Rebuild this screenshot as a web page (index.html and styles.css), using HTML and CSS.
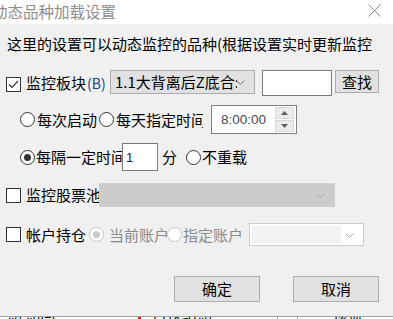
FILE: index.html
```html
<!DOCTYPE html>
<html lang="zh-CN">
<head>
<meta charset="utf-8">
<title>动态品种加载设置</title>
<link rel="stylesheet" href="styles.css">
</head>
<body>
<div class="window">
  <div class="titlebar">
    <span class="title">动态品种加载设置</span>
    <svg class="close" width="13" height="13" viewBox="0 0 13 13"><path d="M0.5 0.5L12.5 12.5M12.5 0.5L0.5 12.5" stroke="#8a8a8a" stroke-width="1" fill="none"/></svg>
  </div>
  <div class="content">
    <div class="desc">这里的设置可以动态监控的品种(根据设置实时更新监控</div>

    <div class="row row1">
      <span class="check checked"><svg width="13" height="13" viewBox="0 0 13 13"><polyline points="2,6.5 5,9.5 11,3" fill="none" stroke="#333" stroke-width="1.2"/></svg></span>
      <span class="lbl lbl-board">监控板块<span class="accel">(B)</span></span>
      <span class="combo combo-board"><span class="combo-text">1.1大背离后Z底合:</span><svg class="chev" width="9" height="5" viewBox="0 0 9 5"><polyline points="0.5,0.5 4.5,4.5 8.5,0.5" fill="none" stroke="#707070" stroke-width="1"/></svg></span>
      <span class="edit edit-search"></span>
      <span class="btn btn-find">查找</span>
    </div>

    <div class="row row2">
      <span class="radio"></span>
      <span class="lbl clip w62">每次启动</span>
      <span class="radio"></span>
      <span class="lbl clip w87">每天指定时间</span>
      <span class="edit time">
        <span class="time-text">8:00:00</span>
        <span class="spin">
          <span class="spin-btn"><svg width="7" height="4" viewBox="0 0 7 4"><polygon points="0,4 3.5,0 7,4" fill="#606060"/></svg></span>
          <span class="spin-btn"><svg width="7" height="4" viewBox="0 0 7 4"><polygon points="0,0 3.5,4 7,0" fill="#606060"/></svg></span>
        </span>
      </span>
    </div>

    <div class="row row3">
      <span class="radio on"></span>
      <span class="lbl clip w86">每隔一定时间</span>
      <span class="edit minutes"><span class="min-text">1</span></span>
      <span class="lbl unit">分</span>
      <span class="radio r-noreload"></span>
      <span class="lbl">不重载</span>
    </div>

    <div class="row row4">
      <span class="check"></span>
      <span class="lbl clip w73">监控股票池</span>
      <span class="combo combo-pool"><svg class="chev" width="9" height="5" viewBox="0 0 9 5"><polyline points="0.5,0.5 4.5,4.5 8.5,0.5" fill="none" stroke="#a8a8a8" stroke-width="1"/></svg></span>
    </div>

    <div class="row row5">
      <span class="check"></span>
      <span class="lbl clip w63">帐户持仓</span>
      <span class="radio dis on"></span>
      <span class="lbl gray clip w58 ml4">当前账户</span>
      <span class="radio dis"></span>
      <span class="lbl gray clip w63">指定账户</span>
      <span class="combo combo-acct"><span class="acct-inner"></span><svg class="chev" width="9" height="5" viewBox="0 0 9 5"><polyline points="0.5,0.5 4.5,4.5 8.5,0.5" fill="none" stroke="#b0b0b0" stroke-width="1"/></svg></span>
    </div>

    <div class="row buttons">
      <span class="btn btn-ok">确定</span>
      <span class="btn btn-cancel">取消</span>
    </div>
  </div>
  <div class="under">
    <span class="frag f1">期 期间</span>
    <span class="mark"></span>
    <span class="frag f2">目模结期</span>
    <span class="vline v1"></span>
    <span class="vline v2"></span>
    <span class="frag f3">损益</span>
  </div>
</div>
</body>
</html>
```
FILE: styles.css
```css
html, body {
  margin: 0;
  padding: 0;
  width: 393px;
  height: 319px;
  overflow: hidden;
  background: #ffffff;
}
.window {
  width: 393px;
  height: 319px;
  font-family: "Noto Sans CJK SC", "Microsoft YaHei", sans-serif;
  font-size: 15px;
  color: #000;
  overflow: hidden;
}
.titlebar {
  height: 24px;
  background: #ffffff;
  display: flex;
  align-items: center;
  justify-content: space-between;
}
.title {
  margin-left: -8px;
  margin-top: -2px;
  font-size: 15.5px;
  line-height: 18px;
  color: #8e8e8e;
  white-space: nowrap;
}
.close {
  margin-right: 12px;
  margin-top: -3px;
}
.content {
  height: 292px;
  background: #f0f0f0;
  display: flex;
  flex-direction: column;
  overflow: hidden;
}
.desc {
  margin-top: 11px;
  margin-left: 7px;
  height: 18px;
  line-height: 18px;
  white-space: nowrap;
}
.row {
  display: flex;
  align-items: center;
  flex-shrink: 0;
}
.row1 { margin-top: 17px; height: 26px; padding-left: 6px; align-items: flex-start; }
.row2 { margin-top: 9px; height: 29px; padding-left: 20px; }
.row3 { margin-top: 9px; height: 28px; padding-left: 20px; }
.row4 { margin-top: 12px; height: 24px; padding-left: 6px; }
.row5 { margin-top: 16px; height: 23px; padding-left: 6px; }
.buttons { margin-top: 30px; height: 26px; }

.lbl {
  line-height: 18px;
  white-space: nowrap;
  flex-shrink: 0;
}
.clip { overflow: hidden; }
.w62 { width: 62px; }
.w63 { width: 63px; }
.w87 { width: 87px; }
.w86 { width: 86px; }
.w73 { width: 73px; }
.w58 { width: 58px; }
.ml4 { margin-left: 4px; }
.gray { color: #8a8a8a; }
.row2 .radio + .lbl { margin-left: 1px; }

.check {
  width: 13px;
  height: 13px;
  border: 1px solid #333;
  background: #fff;
  flex-shrink: 0;
  display: flex;
  margin-right: 5px;
}
.row1 .check { margin-top: 7px; }
.lbl-board {
  width: 84px;
  margin-top: 4px;
}
.accel {
  font-size: 14px;
  color: #1a3a8c;
  margin-left: 1px;
}
.radio {
  width: 13px;
  height: 13px;
  border: 1px solid #333;
  border-radius: 50%;
  background: #fff;
  flex-shrink: 0;
  position: relative;
  margin-right: 1px;
}
.radio.on::after {
  content: "";
  position: absolute;
  left: 3px;
  top: 3px;
  width: 7px;
  height: 7px;
  border-radius: 50%;
  background: #333;
}
.radio.dis {
  border-color: #c4c4c4;
  background: #fff;
}
.radio.dis.on::after { background: #c8c8c8; }

.combo {
  box-sizing: border-box;
  display: flex;
  align-items: center;
  position: relative;
  flex-shrink: 0;
}
.combo-board {
  width: 145px;
  height: 24px;
  background: #e1e1e1;
  border: 1px solid #adadad;
}
.combo-text {
  padding-left: 4px;
  width: 122px;
  overflow: hidden;
  white-space: nowrap;
  line-height: 18px;
}
.chev {
  position: absolute;
  right: 9px;
  top: 50%;
  margin-top: -2px;
}
.edit {
  box-sizing: border-box;
  background: #fff;
  border: 1px solid #7a7a7a;
  flex-shrink: 0;
}
.edit-search {
  width: 70px;
  height: 26px;
  margin-left: 7px;
}
.btn {
  box-sizing: border-box;
  background: #e1e1e1;
  border: 1px solid #adadad;
  display: flex;
  align-items: center;
  justify-content: center;
  line-height: 18px;
  flex-shrink: 0;
}
.btn-find {
  width: 44px;
  height: 23px;
  margin-left: 3px;
}
.time {
  width: 86px;
  height: 29px;
  margin-left: 8px;
  border-color: #808080;
  display: flex;
  align-items: center;
  position: relative;
}
.time-text {
  font-family: "Liberation Sans", Arial, sans-serif;
  font-size: 13.5px;
  color: #444a5a;
  margin-left: 9px;
}
.spin {
  position: absolute;
  right: 2px;
  top: 1px;
  width: 19px;
  height: 25px;
  display: flex;
  flex-direction: column;
  justify-content: space-between;
}
.spin-btn {
  box-sizing: border-box;
  height: 12px;
  background: #ececec;
  border: 1px solid #d8d8d8;
  display: flex;
  align-items: center;
  justify-content: center;
}
.minutes {
  width: 36px;
  height: 28px;
  display: flex;
  align-items: center;
}
.min-text {
  font-family: "Liberation Sans", Arial, sans-serif;
  font-size: 13px;
  color: #102060;
  margin-left: 3px;
}
.unit { margin-left: 4px; }
.r-noreload { margin-left: 9px; }

.combo-pool {
  width: 236px;
  height: 24px;
  background: #cccccc;
  border: 1px solid #d0d0d0;
}
.combo-acct {
  width: 115px;
  height: 23px;
  background: #ffffff;
  border: 1px solid #cccccc;
  margin-left: 3px;
}
.acct-inner {
  position: absolute;
  left: 2px;
  top: 2px;
  width: 89px;
  height: 17px;
  background: #f2f2f2;
}
.btn-ok {
  width: 86px;
  height: 26px;
  margin-left: 174px;
}
.btn-cancel {
  width: 86px;
  height: 26px;
  margin-left: 33px;
}
.under {
  height: 3px;
  border-top: 1px solid #a0a0a0;
  background: #ffffff;
  position: relative;
  overflow: hidden;
}
.frag {
  position: absolute;
  top: -13px;
  line-height: 18px;
  font-size: 15px;
  color: #000;
  white-space: nowrap;
}
.f1 { left: 7px; }
.f2 { left: 152px; }
.f3 { left: 333px; }
.mark {
  position: absolute;
  left: 138px;
  top: 0;
  width: 3px;
  height: 3px;
  background: #d02020;
}
.vline {
  position: absolute;
  top: 0;
  width: 1px;
  height: 3px;
  background: #a0a0a0;
}
.v1 { left: 277px; }
.v2 { left: 297px; }
```
